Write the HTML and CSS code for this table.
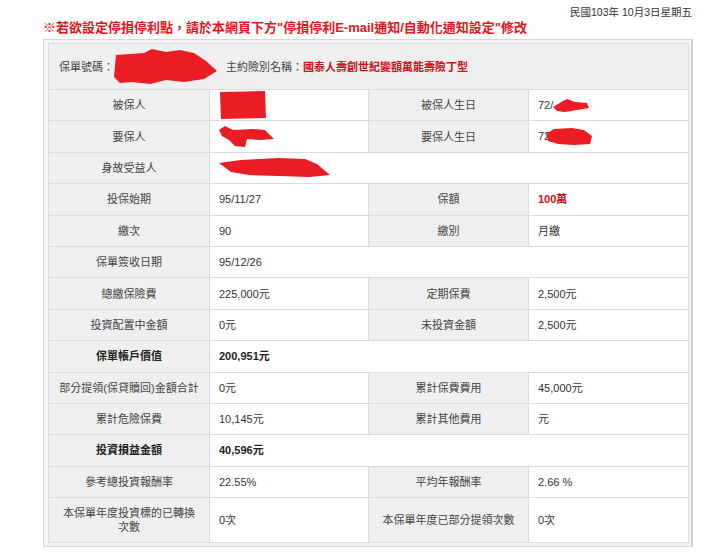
FILE: index.html
```html
<!DOCTYPE html>
<html lang="zh-Hant">
<head>
<meta charset="utf-8">
<title>保單資訊</title>
<link rel="stylesheet" href="styles.css">
</head>
<body>
<div class="page">
  <div class="date">民國103年 10月3日星期五</div>
  <div class="title">※若欲設定停損停利點，請於本網頁下方"停損停利E-mail通知/自動化通知設定"修改</div>
  <div class="box">
    <table class="info">
      <colgroup>
        <col class="c1"><col class="c2"><col class="c3"><col class="c4">
      </colgroup>
      <tr class="head">
        <td colspan="4">
          <div class="headline">
            <span>保單號碼：</span>
            <svg class="blot b-policy" width="104" height="36" viewBox="0 0 104 36"><path d="M2 6 L30 4 L38 0 L52 3 L66 1 L80 4 L92 12 L103 22 L90 30 L70 33 L52 31 L36 35 L18 33 L6 34 L0 28 Z" fill="#ea1c24"/></svg>
            <span class="gap"></span>
            <span>主約險別名稱：</span><span class="plan">國泰人壽創世紀變額萬能壽險丁型</span>
          </div>
        </td>
      </tr>
      <tr>
        <td class="lbl">被保人</td>
        <td class="val"><svg class="blot" width="48" height="30" viewBox="0 0 48 30"><path d="M1 2 L46 1 L47 28 L2 29 Z" fill="#ea1c24"/></svg></td>
        <td class="lbl">被保人生日</td>
        <td class="val">72/<svg class="blot inline" width="36" height="14" viewBox="0 0 36 14"><path d="M0 8 L10 2 L14 0 L22 3 L34 4 L36 9 L24 11 L12 13 L4 12 Z" fill="#ea1c24"/></svg></td>
      </tr>
      <tr>
        <td class="lbl">要保人</td>
        <td class="val"><svg class="blot" width="56" height="22" viewBox="0 0 56 22"><path d="M0 4 L6 0 L14 4 L34 3 L46 4 L55 13 L40 14 L28 13 L26 21 L16 20 L10 14 L3 10 Z" fill="#ea1c24"/></svg></td>
        <td class="lbl">要保人生日</td>
        <td class="val">72<svg class="blot inline shift" width="46" height="18" viewBox="0 0 46 18"><path d="M0 6 L8 1 L26 0 L38 2 L46 8 L44 16 L28 17 L12 16 L2 13 Z" fill="#ea1c24"/></svg></td>
      </tr>
      <tr>
        <td class="lbl">身故受益人</td>
        <td class="val" colspan="3"><svg class="blot" width="112" height="20" viewBox="0 0 112 20"><path d="M0 5 L22 2 L60 0 L86 1 L98 6 L111 17 L90 19 L60 18 L30 17 L12 14 Z" fill="#ea1c24"/></svg></td>
      </tr>
      <tr>
        <td class="lbl">投保始期</td>
        <td class="val">95/11/27</td>
        <td class="lbl">保額</td>
        <td class="val amount">100萬</td>
      </tr>
      <tr>
        <td class="lbl">繳次</td>
        <td class="val">90</td>
        <td class="lbl">繳別</td>
        <td class="val">月繳</td>
      </tr>
      <tr>
        <td class="lbl">保單簽收日期</td>
        <td class="val" colspan="3">95/12/26</td>
      </tr>
      <tr>
        <td class="lbl">總繳保險費</td>
        <td class="val">225,000元</td>
        <td class="lbl">定期保費</td>
        <td class="val">2,500元</td>
      </tr>
      <tr>
        <td class="lbl">投資配置中金額</td>
        <td class="val">0元</td>
        <td class="lbl">未投資金額</td>
        <td class="val">2,500元</td>
      </tr>
      <tr class="strong">
        <td class="lbl">保單帳戶價值</td>
        <td class="val" colspan="3">200,951元</td>
      </tr>
      <tr>
        <td class="lbl">部分提領(保貸贖回)金額合計</td>
        <td class="val">0元</td>
        <td class="lbl">累計保費費用</td>
        <td class="val">45,000元</td>
      </tr>
      <tr>
        <td class="lbl">累計危險保費</td>
        <td class="val">10,145元</td>
        <td class="lbl">累計其他費用</td>
        <td class="val">元</td>
      </tr>
      <tr class="strong">
        <td class="lbl">投資損益金額</td>
        <td class="val" colspan="3">40,596元</td>
      </tr>
      <tr>
        <td class="lbl">參考總投資報酬率</td>
        <td class="val">22.55%</td>
        <td class="lbl">平均年報酬率</td>
        <td class="val">2.66 %</td>
      </tr>
      <tr class="tall">
        <td class="lbl">本保單年度投資標的已轉換次數</td>
        <td class="val">0次</td>
        <td class="lbl">本保單年度已部分提領次數</td>
        <td class="val">0次</td>
      </tr>
    </table>
  </div>
</div>
</body>
</html>
```

FILE: styles.css
```css
html, body {
  margin: 0;
  padding: 0;
  background: #ffffff;
}

body {
  font-family: "Liberation Sans", "Noto Sans CJK TC", sans-serif;
  color: #333333;
}

.page {
  width: 650px;
  margin-left: 43px;
}

.date {
  text-align: right;
  font-size: 10.5px;
  line-height: 14px;
  padding-top: 5px;
  padding-right: 1px;
  color: #333333;
}

.title {
  font-size: 13px;
  font-weight: bold;
  line-height: 16px;
  padding-top: 1px;
  color: #e8141c;
  white-space: nowrap;
}

.box {
  margin-top: 3px;
  border: 1px solid #d6d6d6;
  border-right: 2px solid #d0d0d0;
  padding: 3px 3px 3px 4px;
  background: #f4f4f4;
}

.info {
  width: 640px;
  table-layout: fixed;
  border-collapse: collapse;
  font-size: 11px;
}

.c1 { width: 161px; }
.c2 { width: 159px; }
.c3 { width: 160px; }
.c4 { width: 160px; }

.info td {
  border: 1px solid #dcdcdc;
  height: 31.4px;
  padding: 0 10px;
  line-height: 14px;
  box-sizing: border-box;
}

.info .lbl {
  background: #efefef;
  text-align: center;
  color: #444444;
}

.info .val {
  background: #ffffff;
  text-align: left;
  padding-left: 9px;
  color: #333333;
}

.info tr.head td {
  background: #efefef;
  height: 46px;
  padding: 0 10px;
}

.headline {
  display: flex;
  align-items: center;
  color: #444444;
}

.gap {
  width: 8px;
}

.plan {
  color: #d0111b;
  font-weight: bold;
}

.blot {
  display: block;
}

.blot.inline {
  display: inline-block;
  vertical-align: middle;
}

.blot.shift {
  margin-left: -4px;
}

.info .val.amount {
  color: #c8101a;
  font-weight: bold;
}

.info tr.strong td {
  font-weight: bold;
  color: #222222;
}

.info tr.tall td {
  height: 45px;
}
```
